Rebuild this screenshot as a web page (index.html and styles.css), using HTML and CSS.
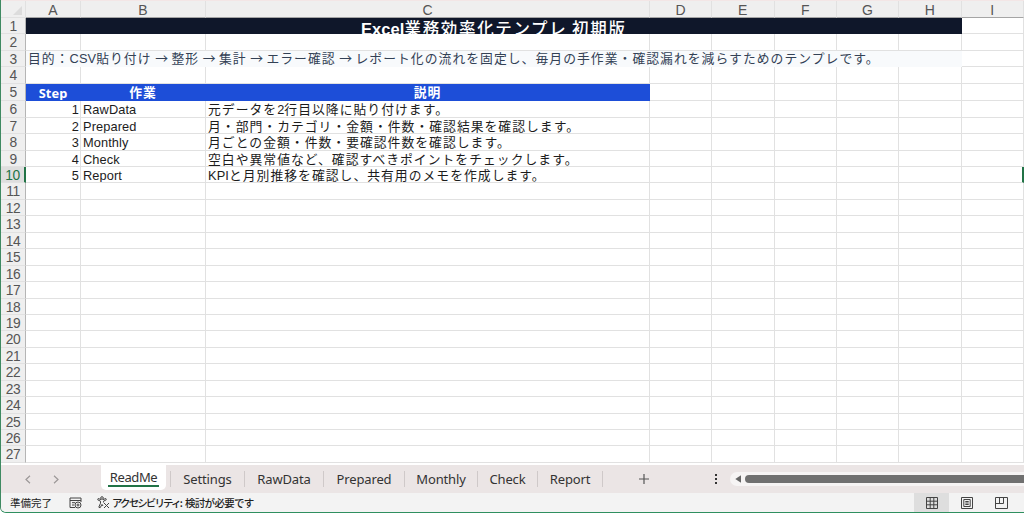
FILE: index.html
```html
<!DOCTYPE html>
<html lang="ja">
<head>
    <meta charset="UTF-8">
    <meta name="viewport" content="width=device-width, initial-scale=1.0">
    <title>Excel業務効率化テンプレ</title>
    <link rel="stylesheet" href="styles.css">
</head>
<body>
    <div class="window">
        <div class="sheet" id="sheet">
            <div class="row col-heads">
                <div class="corner"><svg width="9" height="9" viewBox="0 0 9 9"><path d="M9 0v9H0z" fill="#dcdcdc"/></svg></div>
                <div>A</div><div>B</div><div>C</div><div>D</div><div>E</div><div>F</div><div>G</div><div>H</div><div>I</div>
            </div>
        </div>

        <div class="tabs">
            <div class="arrows">
                <svg width="6" height="9" viewBox="0 0 6 9"><path d="M5 .8L1 4.5l4 3.7"/></svg>
                <svg width="6" height="9" viewBox="0 0 6 9"><path d="M1 .8l4 3.7-4 3.7"/></svg>
            </div>
            <div class="tab active"><span>ReadMe</span></div>
            <div class="tab t-settings">Settings</div>
            <div class="tab t-raw">RawData</div>
            <div class="tab t-prepared">Prepared</div>
            <div class="tab t-monthly">Monthly</div>
            <div class="tab t-check">Check</div>
            <div class="tab t-report">Report</div>
            <svg class="plus" width="10" height="10" viewBox="0 0 10 10"><path d="M5 0v10M0 5h10"/></svg>
            <svg class="dots" width="2" height="10" viewBox="0 0 2 10"><path d="M0 0h2v2H0zM0 4h2v2H0zM0 8h2v2H0z"/></svg>
            <div class="scroll">
                <svg width="6" height="8" viewBox="0 0 6 8"><path d="M6 .3v7.4L.3 4z"/></svg>
                <div class="thumb"></div>
            </div>
        </div>

        <div class="status">
            <span class="ready">準備完了</span>
            <svg class="macro" width="13" height="12" viewBox="0 0 13 12">
                <path d="M6 10.5H1V1h11v4M1 3.5h11M3 5.7h3M3 8h2"/>
                <circle cx="9" cy="8" r="3"/><circle cx="9" cy="8" r="1"/>
            </svg>
            <svg class="access" width="13" height="13" viewBox="0 0 13 13">
                <circle cx="5" cy="2" r="1.3"/>
                <path d="M4 3.6L1.2 2.5.7 3.8l2.8 1.4v2L1.8 11.2l1.3.6L5 8.4l1 1.6M6 3.6l2.8-1.1.5 1.3-2.8 1.4v1.3M7 7l5 5M12 7l-5 5"/>
            </svg>
            <span class="acc-kana">アクセシビリティ:</span>
            <span class="acc-text">検討が必要です</span>
            <div class="views">
                <div class="view on"><svg width="12" height="12" viewBox="0 0 12 12"><path d="M.5.5h11v11H.5zM.5 4.2h11M.5 7.8h11M4.2.5v11M7.8.5v11"/></svg></div>
                <div class="view"><svg width="12" height="12" viewBox="0 0 12 12"><path d="M.5.5h11v11H.5zM2.8 2.5h6.4v7H2.8zM4.3 4.5h3.4M4.3 6h3.4M4.3 7.5h3.4"/></svg></div>
                <div class="view"><svg width="13" height="12" viewBox="0 0 13 12"><path d="M.5.5h12v11H.5zM.5 6.5h8v-6M4.5.5v6"/></svg></div>
            </div>
        </div>
    </div>

    <script>
        const sheet = document.getElementById('sheet');
        const steps = [
            ['RawData', '元データを2行目以降に貼り付けます。'],
            ['Prepared', '月・部門・カテゴリ・金額・件数・確認結果を確認します。'],
            ['Monthly', '月ごとの金額・件数・要確認件数を確認します。'],
            ['Check', '空白や異常値など、確認すべきポイントをチェックします。'],
            ['Report', 'KPIと月別推移を確認し、共有用のメモを作成します。']
        ];

        // Latin runs keep their natural spacing, Japanese text is set wider
        function spaced(text) {
            return text.replace(/[ -~]+/g, '<i>$&</i>').replace(/→/g, '<i class="arrow">→</i>');
        }

        for (let n = 1; n <= 27; n++) {
            const row = document.createElement('div');
            row.className = 'row r' + n;
            let html = '<div class="num">' + n + '</div>';

            if (n === 1) {
                html += '<div class="title">' + spaced('Excel業務効率化テンプレ 初期版') + '</div><div></div>';
            } else if (n === 3) {
                html += '<div class="purpose">' + spaced('目的：CSV貼り付け → 整形 → 集計 → エラー確認 → レポート化の流れを固定し、毎月の手作業・確認漏れを減らすためのテンプレです。') + '</div><div></div>';
            } else {
                let cells = ['', '', ''];
                if (n === 5) cells = ['<i class="step">Step</i>', '作業', '説明'];
                if (n >= 6 && n <= 10) cells = ['<i>' + (n - 5) + '</i>', spaced(steps[n - 6][0]), spaced(steps[n - 6][1])];
                for (let c = 0; c < 9; c++) {
                    html += '<div>' + (cells[c] || '') + '</div>';
                }
            }
            row.innerHTML = html;
            sheet.appendChild(row);
        }
    </script>
</body>
</html>
```
FILE: styles.css
```css
* {
    box-sizing: border-box;
}

body {
    margin: 0;
    background: #fff;
    font-family: "Liberation Sans", "Noto Sans CJK JP", sans-serif;
}

.window {
    height: 513px;
    display: flex;
    flex-direction: column;
    overflow: hidden;
    border-left: 1px solid #3f8a62;
    border-bottom: 1px solid #2f8f5f;
    border-bottom-left-radius: 6px;
}

.sheet {
    height: 465px;
    flex: none;
    overflow: hidden;
    background: #fff;
}

.row {
    display: grid;
    grid-template-columns: 25px 55px 125px 444px 62px 62.5px 62.5px 62px 62.5px 62.5px;
    height: 16.45px;
    font-size: 12.8px;
    line-height: 18px;
    color: #1c1c1c;
}

.row > div {
    border-right: 1px solid #e1e1e1;
    border-bottom: 1px solid #e1e1e1;
    white-space: nowrap;
    overflow: hidden;
    letter-spacing: 1.03px;
}

.row i {
    font-style: normal;
    letter-spacing: 0.1px;
}

.row .arrow {
    font-family: "Noto Sans CJK JP", sans-serif;
    line-height: 1;
    letter-spacing: -0.3px;
}

.col-heads {
    height: 18px;
    background: #efefef;
    border-top: 1px solid #f3e6e6;
}

.row.col-heads > div {
    text-align: center;
    font-size: 14px;
    line-height: 18px;
    color: #555;
    letter-spacing: 0;
    border-bottom-color: #a5a5a5;
}

.row.col-heads > .corner {
    display: flex;
    justify-content: flex-end;
    align-items: flex-end;
    padding: 0 3px 2px 0;
    border-bottom-color: #e1e1e1;
}

.row > .num {
    background: #efefef;
    border-right-color: #b5b5b5;
    text-align: center;
    font-size: 13.8px;
    line-height: 18px;
    color: #555;
    letter-spacing: -0.5px;
}

.row > .title {
    grid-column: 2 / 10;
    background: #0f172a;
    border: none;
    color: #fff;
    font-size: 16.5px;
    font-weight: 500;
    text-align: center;
    line-height: 22px;
    letter-spacing: 1.65px;
}

.title i {
    font-weight: bold;
}

.row > .purpose {
    grid-column: 2 / 10;
    background: #f8fafc;
    border-color: #f8fafc;
    color: #334155;
    padding-left: 2px;
    line-height: 16px;
    letter-spacing: 1.05px;
}

.r5 {
    height: 17.5px;
}

.r5 > div:nth-child(n+2):nth-child(-n+4) {
    background: #1d4ed8;
    border-color: #1d4ed8;
    color: #fff;
    font-weight: bold;
    text-align: center;
}

.row .step {
    font-family: "Noto Sans", sans-serif;
    font-size: 12.8px;
}

.r6 > div:nth-child(2),
.r7 > div:nth-child(2),
.r8 > div:nth-child(2),
.r9 > div:nth-child(2),
.r10 > div:nth-child(2) {
    text-align: right;
    padding-right: 1px;
}

.r6 > div:nth-child(n+3),
.r7 > div:nth-child(n+3),
.r8 > div:nth-child(n+3),
.r9 > div:nth-child(n+3),
.r10 > div:nth-child(n+3) {
    padding-left: 2px;
}

.r10 > .num {
    background: #dedede;
    color: #217346;
    border-right: 2px solid #217346;
}

.r10 > div:last-child {
    border-right: 2px solid #217346;
}

.tabs {
    height: 28px;
    flex: none;
    display: flex;
    align-items: center;
    background: #ebe5e5;
    font-family: "Noto Sans", sans-serif;
    font-size: 13px;
    letter-spacing: -0.15px;
    color: #333;
}

.arrows {
    width: 100px;
    display: flex;
    gap: 22px;
    padding-left: 24px;
}

.arrows svg,
.plus {
    fill: none;
    stroke: #9c9898;
    stroke-width: 1.2;
}

.tab {
    height: 16px;
    line-height: 17px;
    text-align: center;
    border-right: 1px solid #cfc9c9;
}

.tab.active {
    width: 65px;
    height: 25px;
    margin-right: 4px;
    align-self: flex-start;
    background: #fff;
    border: none;
    border-radius: 0 0 5px 5px;
    padding: 3px 0 0;
}

.active span {
    display: block;
    height: 19px;
    margin: 0 7px;
    line-height: 19px;
    letter-spacing: -0.4px;
    border-bottom: 2px solid #217346;
}

.t-settings {
    width: 75px;
    border-left: 1px solid #cfc9c9;
}

.t-raw { width: 79px; }
.t-prepared { width: 81px; }
.t-monthly { width: 73px; }
.t-check { width: 60px; }
.t-report { width: 65px; }

.plus {
    margin-left: 36px;
    stroke: #555;
}

.dots {
    margin-left: 66px;
    fill: #333;
}

.scroll {
    flex: 1;
    height: 14px;
    margin-left: 13px;
    display: flex;
    align-items: center;
    gap: 4px;
    padding-left: 5px;
    background: #f6f4f4;
    border-radius: 7px 0 0 7px;
    fill: #666;
}

.thumb {
    flex: 1;
    height: 8px;
    background: #707070;
    border-radius: 4px 0 0 4px;
}

.status {
    flex: 1;
    display: flex;
    align-items: center;
    background: #f3f3f3;
    font-family: "Noto Sans CJK JP", sans-serif;
    font-size: 10.5px;
    line-height: 18px;
    color: #222;
    white-space: nowrap;
}

.ready {
    width: 59px;
    padding-left: 9px;
}

.macro,
.access {
    margin-left: 9px;
    fill: none;
    stroke: #444;
}

.access {
    margin-left: 15px;
}

.acc-kana {
    width: 73px;
    margin-left: 2px;
    font-weight: 500;
    letter-spacing: -1.9px;
}

.acc-text {
    font-weight: 500;
    letter-spacing: -0.7px;
}

.views {
    display: flex;
    height: 100%;
    margin-left: auto;
    margin-right: 5px;
}

.view {
    width: 35px;
    display: flex;
    justify-content: center;
    align-items: center;
    fill: none;
    stroke: #444;
}

.view.on {
    background: #dedede;
}
```
